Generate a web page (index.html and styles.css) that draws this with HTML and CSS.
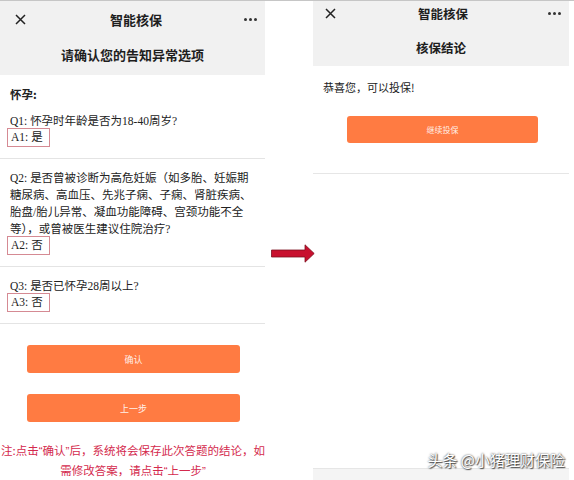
FILE: index.html
```html
<!DOCTYPE html>
<html lang="zh-CN">
<head>
<meta charset="utf-8">
<link rel="stylesheet" href="styles.css">
</head>
<body>
<div class="screen">
  <section class="phone left">
    <header class="hdr">
      <div class="nav">
        <svg class="close" viewBox="0 0 11 11" width="11" height="11"><path d="M1 1L10 10M10 1L1 10"/></svg>
        <span class="title">智能核保</span>
        <span class="more"><i></i><i></i><i></i></span>
      </div>
      <div class="sub">请确认您的告知异常选项</div>
    </header>
    <div class="group">
      <div class="heading">怀孕:</div>
      <p class="q">Q1: 怀孕时年龄是否为18-40周岁?</p>
      <div class="a">A1: 是</div>
    </div>
    <div class="group">
      <p class="q">Q2: 是否曾被诊断为高危妊娠（如多胎、妊娠期糖尿病、高血压、先兆子痫、子痫、肾脏疾病、胎盘/胎儿异常、凝血功能障碍、宫颈功能不全等），或曾被医生建议住院治疗?</p>
      <div class="a">A2: 否</div>
    </div>
    <div class="group">
      <p class="q">Q3: 是否已怀孕28周以上?</p>
      <div class="a">A3: 否</div>
    </div>
    <div class="actions">
      <button class="btn">确认</button>
      <button class="btn">上一步</button>
    </div>
    <p class="note">注:点击<span class="qt">“</span>确认<span class="qt">”</span>后，系统将会保存此次答题的结论，如<br>需修改答案，请点击<span class="qt">“</span>上一步<span class="qt">”</span></p>
  </section>

  <div class="gap">
    <svg class="arrow" viewBox="0 0 44 19" width="44" height="19"><path d="M0.5 6H34V0.8L43.2 9.5L34 18.2V13H0.5Z"/></svg>
  </div>

  <section class="phone right">
    <header class="hdr">
      <div class="nav">
        <svg class="close" viewBox="0 0 11 11" width="11" height="11"><path d="M1 1L10 10M10 1L1 10"/></svg>
        <span class="title">智能核保</span>
        <span class="more"><i></i><i></i><i></i></span>
      </div>
      <div class="sub">核保结论</div>
    </header>
    <div class="result">
      <p class="msg">恭喜您，可以投保!</p>
      <button class="btn">继续投保</button>
    </div>
    <div class="foot"></div>
  </section>
</div>
<div class="watermark">头条 @小猪理财保险</div>
</body>
</html>
```

FILE: styles.css
```css
* {
  box-sizing: border-box;
  margin: 0;
  padding: 0;
}

body {
  width: 574px;
  height: 480px;
  overflow: hidden;
  position: relative;
  background: #fff;
  border-top: 1px solid #c6c6c6;
  font-family: "Noto Sans CJK SC", sans-serif;
  color: #222;
}

.screen {
  display: flex;
  height: 479px;
}

.phone {
  display: flex;
  flex-direction: column;
}

.left {
  width: 265px;
}

.right {
  width: 256px;
}

.gap {
  width: 48px;
  padding: 243px 0 0 6px;
}

.arrow {
  display: block;
  overflow: visible;
}

.arrow path {
  fill: #c8102e;
  stroke: #7c1020;
  stroke-width: 0.8;
}

.hdr {
  background: #f1f1f1;
}

.nav {
  display: grid;
  grid-template-columns: 1fr auto 1fr;
  align-items: center;
}

.left .nav {
  height: 36px;
  padding: 0 8px 0 15px;
}

.right .nav {
  height: 25px;
  padding: 0 8px 0 12px;
}

.close {
  display: block;
}

.close path {
  stroke: #222;
  stroke-width: 1.5;
  fill: none;
}

.title {
  font-size: 13px;
  font-weight: 700;
  color: #1e1e1e;
}

.right .title {
  font-size: 12.5px;
}

.more {
  justify-self: end;
  display: flex;
  gap: 2px;
}

.more i {
  width: 3px;
  height: 3px;
  border-radius: 50%;
  background: #333;
}

.sub {
  display: flex;
  align-items: center;
  justify-content: center;
  font-size: 13px;
  font-weight: 700;
  color: #1e1e1e;
}

.left .sub {
  height: 38px;
  padding-bottom: 4px;
}

.right .sub {
  height: 40px;
  padding-top: 2px;
  font-size: 12.5px;
}

.group {
  padding: 11px 10px 11px 10px;
  border-bottom: 1px solid #e4e4e4;
}

.heading {
  font-size: 11.5px;
  font-weight: 700;
  line-height: 17px;
  margin-bottom: 10px;
}

.q {
  font-family: "Liberation Serif", "Noto Sans CJK SC", serif;
  font-size: 11.5px;
  line-height: 17px;
  padding-right: 2px;
  color: #222;
}

.a {
  width: fit-content;
  margin: -2px 0 0 -3px;
  padding: 0 6px 0 3px;
  border: 1px solid #d58a93;
  font-family: "Liberation Serif", "Noto Sans CJK SC", serif;
  font-size: 11.5px;
  line-height: 17px;
}

.actions {
  display: flex;
  flex-direction: column;
  gap: 21px;
  padding: 21px 25px 0 27px;
}

.btn {
  height: 28px;
  border: none;
  border-radius: 3px;
  background: #ff7b42;
  color: rgba(255, 255, 255, 0.9);
  font-family: "Noto Sans CJK SC", sans-serif;
  font-size: 9px;
}

.note {
  margin: 19px -3px 0 -2px;
  text-align: center;
  white-space: nowrap;
  font-size: 11.5px;
  line-height: 19px;
  color: #d42a4d;
}

.qt {
  font-family: "Liberation Sans", sans-serif;
}

.result {
  padding: 13px 0 30px 0;
  border-bottom: 1px solid #e6e6e6;
}

.msg {
  padding-left: 10px;
  font-size: 11px;
  line-height: 17px;
  color: #222;
}

.result .btn {
  display: block;
  width: 191px;
  height: 27px;
  margin: 20px 0 0 34px;
  font-size: 8px;
}

.foot {
  margin-top: auto;
  height: 12px;
  background: #f4f4f4;
  border-top: 1px solid #e6e6e6;
}

.watermark {
  position: absolute;
  right: 9px;
  bottom: 9px;
  font-size: 15px;
  line-height: 22px;
  color: #fff;
  text-shadow: 0 0 2px #333, 1px 1px 1px #555;
}
```
